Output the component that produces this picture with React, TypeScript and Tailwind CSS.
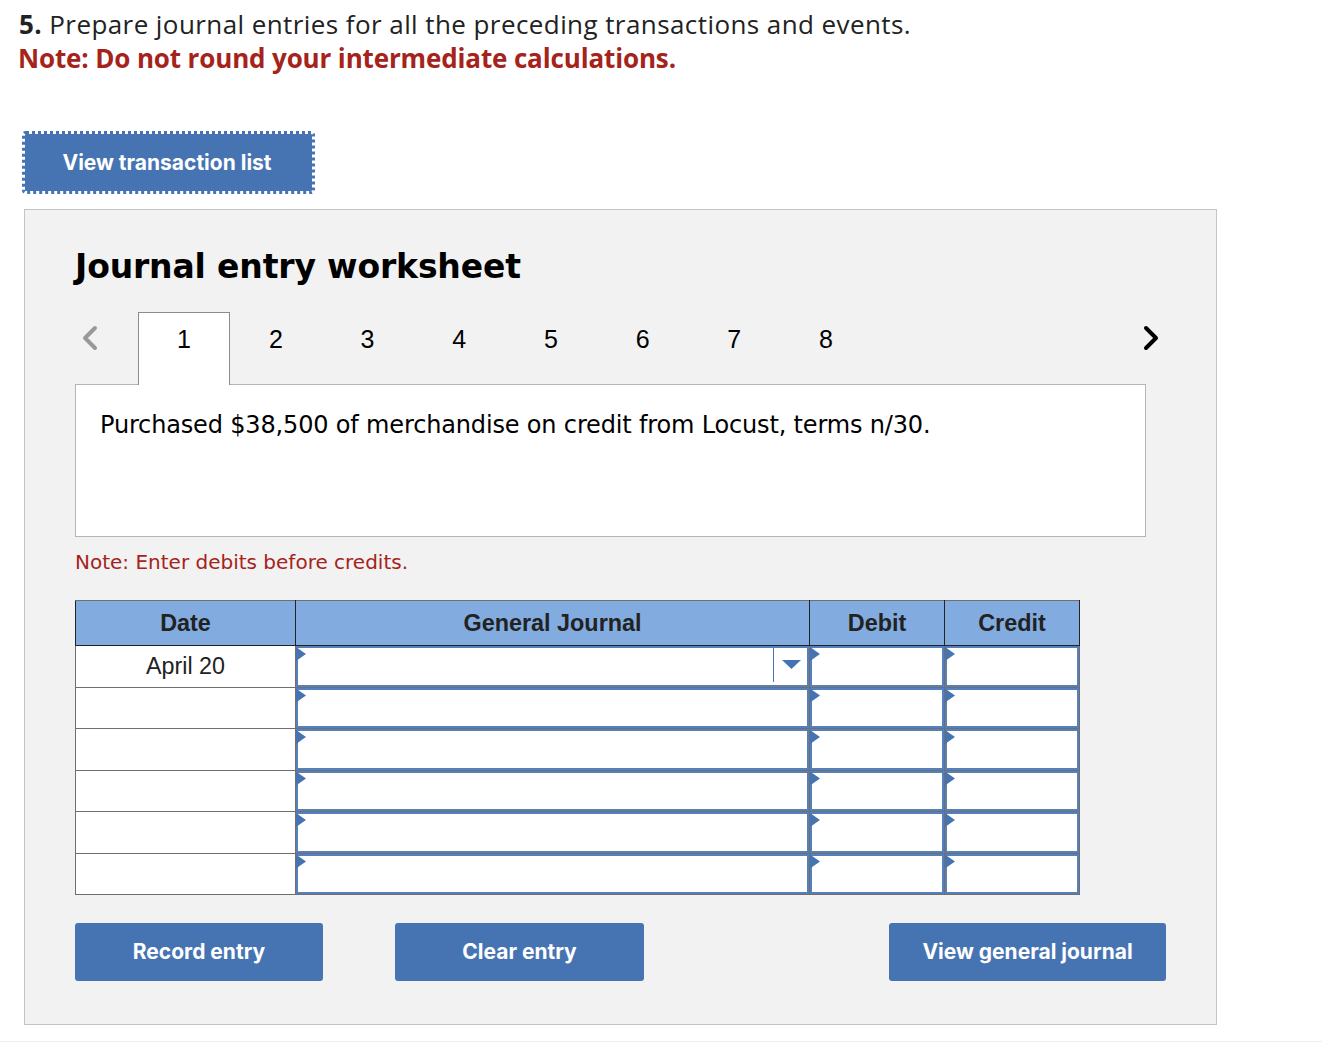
import { ChevronLeft, ChevronRight } from 'lucide-react';

const TABS = ['1', '2', '3', '4', '5', '6', '7', '8'];
const ROWS = ['April 20', '', '', '', '', ''];

function Flag() {
  return <span className="absolute left-0 top-[1px] w-[10px] h-[14px] bg-[#4674b3] [clip-path:polygon(0_0,100%_50%,0_100%)]" />;
}

function InputCell({ children }: { children?: React.ReactNode }) {
  return (
    <td className="relative p-0 border border-[#6f6f6f]">
      <div className="absolute inset-0 border-2 border-[#5580bb] bg-white">{children}</div>
      <Flag />
    </td>
  );
}

function ActionButton({ label, className }: { label: string; className: string }) {
  return (
    <button type="button" className={`h-[58px] rounded-[3px] bg-[#4674b3] text-white text-[21px] font-bold font-['Inter',sans-serif] ${className}`}>
      {label}
    </button>
  );
}

export default function App() {
  return (
    <div className="h-[1044px] bg-white overflow-hidden">
      {/* question */}
      <div className="pl-[19px] pt-[8px] text-[26px] leading-[33px] font-['Open_Sans',sans-serif] text-[#222]">
        <p className="tracking-[0.42px]"><b>5.</b> Prepare journal entries for all the preceding transactions and events.</p>
        <p className="-ml-px mt-px font-bold text-[#a5231b] tracking-[-0.14px]">Note: Do not round your intermediate calculations.</p>
      </div>

      <button
        type="button"
        className="block ml-[22px] mt-[56px] w-[293px] h-[63px] pr-[3px] rounded-[4px] bg-[#4674b3] bg-clip-padding border-[3px] border-dotted border-[#4674b3] outline-none text-white text-[21px] font-bold font-['Inter',sans-serif]"
      >
        View transaction list
      </button>

      {/* worksheet */}
      <div className="ml-[24px] mt-[15px] w-[1193px] h-[816px] border border-[#c4c4c4] bg-[#f2f2f2] pl-[50px] pt-[34px]">
        <h2 className="h-[46px] text-[33px] leading-[46px] font-bold tracking-[-0.15px] text-black font-['DejaVu_Sans',sans-serif]">Journal entry worksheet</h2>

        {/* tabs */}
        <div className="relative z-10 mt-[22px] flex h-[73px] w-[1091px] items-start">
          <ChevronLeft className="w-[40px] h-[40px] mt-[6px] -ml-[5px] mr-[28px] text-[#999]" strokeWidth={2.4} />
          {TABS.map((t, i) => (
            <div
              key={t}
              className={
                i === 0
                  ? 'w-[92px] h-[73px] border border-b-0 border-[#8c8c8c] bg-white text-center text-[25px] leading-[53px] text-black font-["Liberation_Sans",sans-serif]'
                  : 'w-[91.7px] h-[55px] text-center text-[25px] leading-[55px] text-black font-["Liberation_Sans",sans-serif]'
              }
            >
              {t}
            </div>
          ))}
          <ChevronRight className="ml-auto w-[40px] h-[40px] mt-[6px] -mr-[5px] text-black" strokeWidth={2.4} />
        </div>

        <div className="-mt-[1px] w-[1071px] h-[153px] border border-[#b5b5b5] bg-white pl-[24px] pt-[24px] text-[24px] leading-[32px] tracking-[-0.16px] text-black font-['DejaVu_Sans',sans-serif]">
          Purchased $38,500 of merchandise on credit from Locust, terms n/30.
        </div>

        <p className="mt-[12px] text-[20px] leading-[26px] text-[#a5231b] font-['DejaVu_Sans',sans-serif]">Note: Enter debits before credits.</p>

        <table className="mt-[25px] w-[1005px] table-fixed border-collapse font-['Liberation_Sans',sans-serif] bg-white">
          <colgroup>
            <col className="w-[220px]" />
            <col className="w-[514px]" />
            <col className="w-[135px]" />
            <col className="w-[135px]" />
          </colgroup>
          <thead>
            <tr className="h-[45px] bg-[#82abe0] text-[23.4px] text-[#222]">
              {['Date', 'General Journal', 'Debit', 'Credit'].map((h) => (
                <th key={h} className="p-0 pt-[2px] border border-[#222] border-t-[#6f6f6f] font-bold">{h}</th>
              ))}
            </tr>
          </thead>
          <tbody>
            {ROWS.map((date, i) => (
              <tr key={i} className="h-[41.5px]">
                <td className="p-0 border border-[#6f6f6f] text-center text-[23.3px] text-[#222]">{date}</td>
                <InputCell>
                  {i === 0 && (
                    <div className="absolute right-0 top-0 bottom-[3px] w-[34px] border-l border-[#4674b3]">
                      <span className="absolute left-[8px] top-[12px] w-[19px] h-[9px] bg-[#4674b3] [clip-path:polygon(0_0,100%_0,50%_100%)]" />
                    </div>
                  )}
                </InputCell>
                <InputCell />
                <InputCell />
              </tr>
            ))}
          </tbody>
        </table>

        <div className="mt-[28px] flex w-[1091px]">
          <ActionButton label="Record entry" className="w-[248px]" />
          <ActionButton label="Clear entry" className="ml-[72px] w-[249px]" />
          <ActionButton label="View general journal" className="ml-auto w-[277px]" />
        </div>
      </div>
      <div className="mt-[16px] border-t border-[#eee]" />
    </div>
  );
}
